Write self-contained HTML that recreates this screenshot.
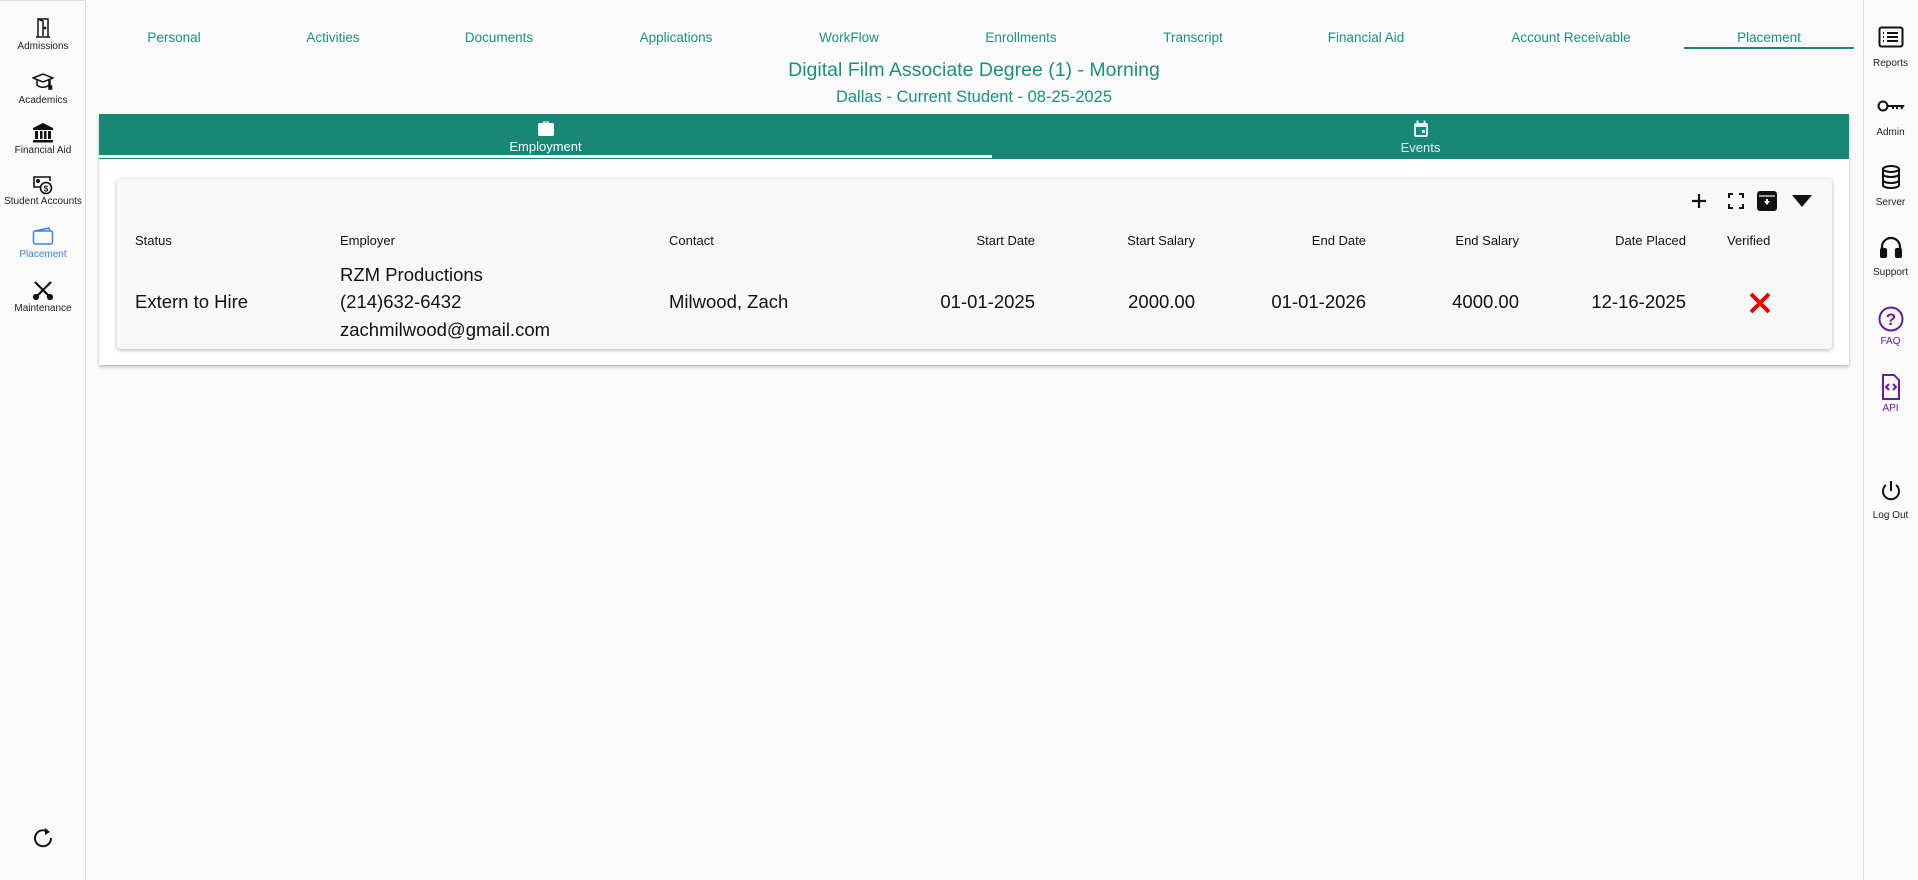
<!DOCTYPE html>
<html><head><meta charset="utf-8"><style>
*{box-sizing:border-box;margin:0;padding:0}
body{width:1918px;height:880px;background:#fafafa;font-family:"Liberation Sans",sans-serif;position:relative;overflow:hidden;color:#111}
.abs{position:absolute}
.lsb{left:0;top:0;width:86px;height:880px;border-right:1px solid #ddd;border-top:1px solid #ddd}
.rsb{left:1863px;top:0;width:55px;height:880px;border-left:1px solid #ddd}
.it{position:absolute;width:86px;text-align:center;font-size:10px;color:#222}
.rit{position:absolute;left:1863px;width:55px;text-align:center;font-size:10px;color:#222}
.tab{position:absolute;top:30px;font-size:13.5px;color:#1a9080;transform:translateX(-50%);white-space:nowrap}
.h{position:absolute;top:233px;font-size:13px;color:#111;white-space:nowrap}
.c{position:absolute;font-size:18.5px;color:#111;white-space:nowrap}
.r{transform:translateX(-100%)}
svg{display:block;margin:0 auto}
</style></head><body>
<div class="abs lsb"></div>
<div class="abs rsb"></div>

<div class="it" style="top:18px"><svg width="16" height="20" viewBox="0 0 16 20" fill="none" stroke="#111" stroke-width="1.5"><path d="M3 19V1h10v18M1 19h14M3 1l5 2v15"/><circle cx="10" cy="10" r=".6" fill="#111"/></svg><div style="margin-top:3px">Admissions</div></div>
<div class="it" style="top:72px"><svg width="22" height="20" viewBox="0 0 22 20" fill="none" stroke="#111" stroke-width="1.5"><path d="M1 6l10-4 10 4-10 4z M5 8v5c3 3 9 3 12 0V8M18 7v8"/><rect x="17" y="14" width="2.5" height="3" fill="#111"/></svg><div style="margin-top:3px">Academics</div></div>
<div class="it" style="top:123px"><svg width="22" height="20" viewBox="0 0 22 20" fill="#111"><path d="M11 0L1 5v2h20V5z"/><rect x="3" y="8" width="3" height="8"/><rect x="8" y="8" width="2.5" height="8"/><rect x="12" y="8" width="2.5" height="8"/><rect x="16" y="8" width="3" height="8"/><rect x="1" y="17" width="20" height="2.5"/></svg><div style="margin-top:2px">Financial Aid</div></div>
<div class="it" style="top:175px"><svg width="22" height="20" viewBox="0 0 22 20" fill="none" stroke="#111" stroke-width="1.6"><path d="M8 12H2V2h16v4"/><circle cx="6" cy="6" r="1.2" fill="#111"/><circle cx="14" cy="13" r="5.5" fill="#fafafa"/><text x="14" y="16.5" font-size="8" text-anchor="middle" fill="#111" stroke="none" font-weight="bold">$</text></svg><div style="margin-top:1px">Student Accounts</div></div>
<div class="it" style="top:227px;color:#3b82e0"><svg width="22" height="18" viewBox="0 0 22 18" fill="none" stroke="#3b82e0" stroke-width="1.5"><rect x="1.5" y="4" width="19" height="13" rx="2"/><path d="M3 4l14-3 1 3"/></svg><div style="margin-top:4px">Placement</div></div>
<div class="it" style="top:279px"><svg width="22" height="22" viewBox="0 0 22 22" fill="none" stroke="#111" stroke-width="2.2"><path d="M3 3l16 16M19 3L3 19"/><circle cx="4" cy="18" r="2"/><circle cx="18" cy="18" r="2"/></svg><div style="margin-top:2px">Maintenance</div></div>
<div class="it" style="top:826px"><svg width="24" height="24" viewBox="0 0 24 24" fill="none" stroke="#111" stroke-width="2"><path d="M17 6A8 8 0 1 0 20 12"/><path d="M14 2l5 4-5 3z" fill="#111" stroke="none"/></svg></div>

<div class="rit" style="top:26px"><svg width="26" height="22" viewBox="0 0 26 22" fill="none" stroke="#111" stroke-width="2"><rect x="1.5" y="1.5" width="23" height="19" rx="2"/><path d="M9 7h11M9 11h11M9 15h11M5 7h1M5 11h1M5 15h1"/></svg><div style="margin-top:10px">Reports</div></div>
<div class="rit" style="top:99px"><svg width="28" height="14" viewBox="0 0 28 14" fill="none" stroke="#111" stroke-width="2"><circle cx="6" cy="7" r="4.5"/><path d="M10.5 7H26l-2 3M20 7v3M16 7v3"/></svg><div style="margin-top:14px">Admin</div></div>
<div class="rit" style="top:165px"><svg width="20" height="24" viewBox="0 0 20 24" fill="none" stroke="#111" stroke-width="2"><ellipse cx="10" cy="4" rx="8" ry="3"/><path d="M2 4v16c0 4 16 4 16 0V4M2 9c0 4 16 4 16 0M2 15c0 4 16 4 16 0"/></svg><div style="margin-top:8px">Server</div></div>
<div class="rit" style="top:236px"><svg width="22" height="22" viewBox="0 0 22 22" fill="none" stroke="#111" stroke-width="2.2"><path d="M2 15v-4a9 9 0 0 1 18 0v4"/><rect x="1" y="13" width="5" height="8" rx="1" fill="#111"/><rect x="16" y="13" width="5" height="8" rx="1" fill="#111"/></svg><div style="margin-top:9px">Support</div></div>
<div class="rit" style="top:306px;color:#6a1b9a"><svg width="26" height="26" viewBox="0 0 26 26"><circle cx="13" cy="13" r="11.5" fill="none" stroke="#6a1b9a" stroke-width="2"/><text x="13" y="19" font-size="17" font-weight="bold" text-anchor="middle" fill="#6a1b9a" font-family="Liberation Sans">?</text></svg><div style="margin-top:4px">FAQ</div></div>
<div class="rit" style="top:374px;color:#6a1b9a"><svg width="20" height="26" viewBox="0 0 20 26" fill="none" stroke="#6a1b9a" stroke-width="2"><path d="M2 1h11l5 5v19H2z"/><path d="M8 10l-3 3 3 3M12 10l3 3-3 3"/></svg><div style="margin-top:3px">API</div></div>
<div class="rit" style="top:480px"><svg width="22" height="24" viewBox="0 0 22 24" fill="none" stroke="#111" stroke-width="2"><path d="M11 1v10M6 5a8 8 0 1 0 10 0"/></svg><div style="margin-top:6px">Log Out</div></div>

<div class="tab" style="left:174px">Personal</div>
<div class="tab" style="left:333px">Activities</div>
<div class="tab" style="left:499px">Documents</div>
<div class="tab" style="left:676px">Applications</div>
<div class="tab" style="left:849px">WorkFlow</div>
<div class="tab" style="left:1021px">Enrollments</div>
<div class="tab" style="left:1193px">Transcript</div>
<div class="tab" style="left:1366px">Financial Aid</div>
<div class="tab" style="left:1571px">Account Receivable</div>
<div class="tab" style="left:1769px">Placement</div>
<div class="abs" style="left:1684px;top:47px;width:170px;height:2px;background:#1a8776"></div>

<div class="abs" style="left:99px;width:1750px;top:59px;text-align:center;font-size:19.5px;color:#1a9080">Digital Film Associate Degree (1) - Morning</div>
<div class="abs" style="left:99px;width:1750px;top:88px;text-align:center;font-size:16.5px;color:#1a9080">Dallas - Current Student - 08-25-2025</div>

<div class="abs" style="left:99px;top:114px;width:1750px;height:251px;background:#fff;box-shadow:0 2px 3px rgba(0,0,0,.25)"></div>
<div class="abs" style="left:99px;top:114px;width:1750px;height:45px;background:#198776"></div>
<div class="abs" style="left:99px;top:155px;width:893px;height:3px;background:#fff"></div>
<div class="abs" style="left:99px;width:893px;top:120px;text-align:center;color:#fff;font-size:13px"><svg width="18" height="16" viewBox="0 0 18 16" fill="#fff"><path d="M6 3V1.5h6V3h-1.3v-.5H7.3V3z"/><rect x="1" y="3" width="16" height="13" rx="2"/></svg><div style="margin-top:3px">Employment</div></div>
<div class="abs" style="left:992px;width:857px;top:120px;text-align:center;color:#e0eeec;font-size:13px"><svg width="16" height="18" viewBox="0 0 16 18" fill="#e0eeec"><rect x="1" y="3" width="14" height="14" rx="2"/><rect x="3.5" y="0.5" width="2" height="4"/><rect x="10.5" y="0.5" width="2" height="4"/><rect x="3" y="7" width="10" height="8" fill="#198776"/><rect x="9" y="10" width="3" height="3" fill="#e0eeec"/></svg><div style="margin-top:2px">Events</div></div>

<div class="abs" style="left:117px;top:179px;width:1715px;height:170px;background:#f8f8f8;border-radius:3px;box-shadow:0 1px 4px rgba(0,0,0,.3)"></div>
<svg class="abs" style="left:1690px;top:192px" width="18" height="18" viewBox="0 0 18 18" stroke="#111" stroke-width="2.2"><path d="M9 2v14M2 9h14"/></svg>
<svg class="abs" style="left:1728px;top:193px" width="16" height="16" viewBox="0 0 16 16" fill="none" stroke="#111" stroke-width="2"><path d="M1 5V1h4M11 1h4v4M15 11v4h-4M5 15H1v-4"/></svg>
<svg class="abs" style="left:1757px;top:191px" width="20" height="20" viewBox="0 0 20 20"><rect x="0" y="0" width="20" height="20" rx="3" fill="#111"/><path d="M2 5h16" stroke="#f8f8f8" stroke-width="1.2"/><path d="M7 10h6l-3 4z M9 8h2v3H9z" fill="#fff"/></svg>
<svg class="abs" style="left:1792px;top:195px" width="20" height="12" viewBox="0 0 20 12"><path d="M0 0h20L10 12z" fill="#111"/></svg>

<div class="h" style="left:135px">Status</div>
<div class="h" style="left:340px">Employer</div>
<div class="h" style="left:669px">Contact</div>
<div class="h r" style="left:1035px">Start Date</div>
<div class="h r" style="left:1195px">Start Salary</div>
<div class="h r" style="left:1366px">End Date</div>
<div class="h r" style="left:1519px">End Salary</div>
<div class="h r" style="left:1686px">Date Placed</div>
<div class="h" style="left:1727px">Verified</div>

<div class="c" style="left:135px;top:291px">Extern to Hire</div>
<div class="c" style="left:340px;top:264px">RZM Productions</div>
<div class="c" style="left:340px;top:291px">(214)632-6432</div>
<div class="c" style="left:340px;top:319px">zachmilwood@gmail.com</div>
<div class="c" style="left:669px;top:291px">Milwood, Zach</div>
<div class="c r" style="left:1035px;top:291px">01-01-2025</div>
<div class="c r" style="left:1195px;top:291px">2000.00</div>
<div class="c r" style="left:1366px;top:291px">01-01-2026</div>
<div class="c r" style="left:1519px;top:291px">4000.00</div>
<div class="c r" style="left:1686px;top:291px">12-16-2025</div>
<svg class="abs" style="left:1749px;top:292px" width="22" height="22" viewBox="0 0 22 22" stroke="#e00" stroke-width="4"><path d="M2 2l18 18M20 2L2 20"/></svg>
</body></html>
